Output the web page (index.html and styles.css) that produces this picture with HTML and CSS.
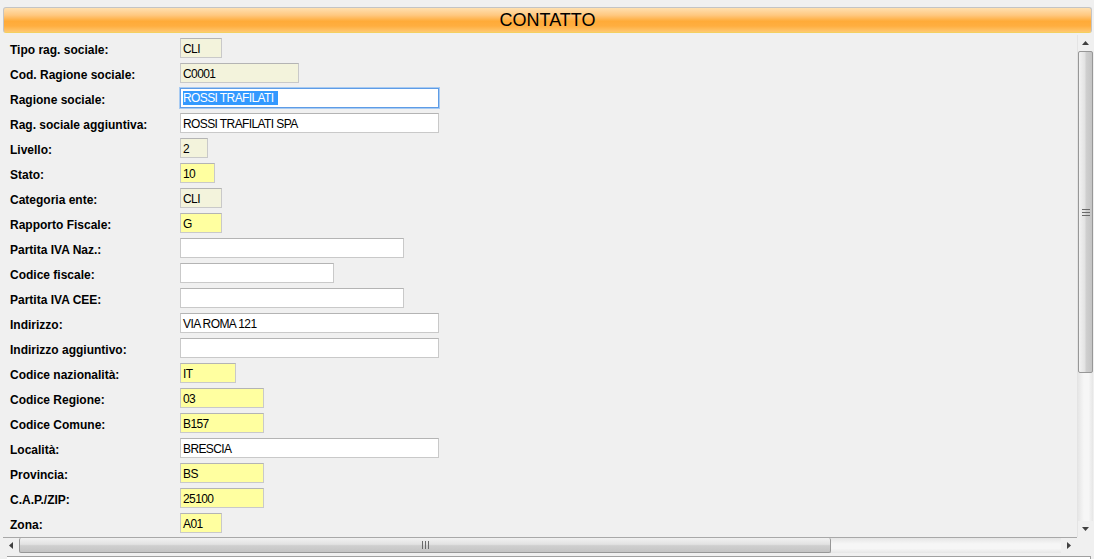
FILE: index.html
```html
<!DOCTYPE html>
<html lang="it">
<head>
<meta charset="utf-8">
<title>Contatto</title>
<link rel="stylesheet" href="styles.css">
</head>
<body>
<div class="page">
  <div class="header">CONTATTO</div>
  <div class="panel">
    <div class="content">
      <div class="row"><span class="label">Tipo rag. sociale:</span><span class="field ro" style="width:42px">CLI</span></div>
      <div class="row"><span class="label">Cod. Ragione sociale:</span><span class="field ro" style="width:119px">C0001</span></div>
      <div class="row"><span class="label">Ragione sociale:</span><span class="field focus" style="width:259px"><span class="sel">ROSSI TRAFILATI</span></span></div>
      <div class="row"><span class="label">Rag. sociale aggiuntiva:</span><span class="field" style="width:259px">ROSSI TRAFILATI SPA</span></div>
      <div class="row"><span class="label">Livello:</span><span class="field ro" style="width:28px">2</span></div>
      <div class="row"><span class="label">Stato:</span><span class="field req" style="width:35px">10</span></div>
      <div class="row"><span class="label">Categoria ente:</span><span class="field ro" style="width:42px">CLI</span></div>
      <div class="row"><span class="label">Rapporto Fiscale:</span><span class="field req" style="width:42px">G</span></div>
      <div class="row"><span class="label">Partita IVA Naz.:</span><span class="field" style="width:224px"></span></div>
      <div class="row"><span class="label">Codice fiscale:</span><span class="field" style="width:154px"></span></div>
      <div class="row"><span class="label">Partita IVA CEE:</span><span class="field" style="width:224px"></span></div>
      <div class="row"><span class="label">Indirizzo:</span><span class="field" style="width:259px">VIA ROMA 121</span></div>
      <div class="row"><span class="label">Indirizzo aggiuntivo:</span><span class="field" style="width:259px"></span></div>
      <div class="row"><span class="label">Codice nazionalità:</span><span class="field req" style="width:56px">IT</span></div>
      <div class="row"><span class="label">Codice Regione:</span><span class="field req" style="width:84px">03</span></div>
      <div class="row"><span class="label">Codice Comune:</span><span class="field req" style="width:84px">B157</span></div>
      <div class="row"><span class="label">Località:</span><span class="field" style="width:259px">BRESCIA</span></div>
      <div class="row"><span class="label">Provincia:</span><span class="field req" style="width:84px">BS</span></div>
      <div class="row"><span class="label">C.A.P./ZIP:</span><span class="field req" style="width:84px">25100</span></div>
      <div class="row"><span class="label">Zona:</span><span class="field req" style="width:42px">A01</span></div>
    </div>
    <div class="vscroll">
      <div class="vbtn"><svg width="7" height="4" viewBox="0 0 7 4"><path d="M3.5 0 L7 4 L0 4 Z" fill="#404040"/></svg></div>
      <div class="vtrack">
        <div class="vthumb"><svg width="8" height="7" viewBox="0 0 8 7"><path d="M0 0.5h8M0 3.5h8M0 6.5h8" stroke="#6a6a6a" stroke-width="1"/></svg></div>
      </div>
      <div class="vbtn"><svg width="7" height="4" viewBox="0 0 7 4"><path d="M0 0 L7 0 L3.5 4 Z" fill="#404040"/></svg></div>
    </div>
    <div class="hscroll">
      <div class="hbtn"><svg width="4" height="7" viewBox="0 0 4 7"><path d="M0 3.5 L4 0 L4 7 Z" fill="#404040"/></svg></div>
      <div class="htrack">
        <div class="hthumb"><svg width="7" height="8" viewBox="0 0 7 8"><path d="M0.5 0v8M3.5 0v8M6.5 0v8" stroke="#6a6a6a" stroke-width="1"/></svg></div>
      </div>
      <div class="hbtn"><svg width="4" height="7" viewBox="0 0 4 7"><path d="M0 0 L4 3.5 L0 7 Z" fill="#404040"/></svg></div>
    </div>
    <div class="corner"></div>
  </div>
  <div class="bottom"></div>
</div>
</body>
</html>
```

FILE: styles.css
```css
html, body {
  margin: 0;
  padding: 0;
  background: #f0f0f0;
  overflow: hidden;
  height: 559px;
}
body {
  font-family: "Liberation Sans", Arial, sans-serif;
  color: #000;
}
.page {
  padding: 7px 1px 0 3px;
}
.header {
  height: 26px;
  box-sizing: border-box;
  margin-right: 1px;
  border: 1px solid #c4c4c4;
  border-bottom-color: #f4d060;
  border-radius: 3px;
  background: linear-gradient(to bottom, #ffe0b0 0%, #ffc880 30%, #ffab38 55%, #ffae40 75%, #ffc870 100%);
  text-align: center;
  font-size: 18px;
  line-height: 25px;
}
.panel {
  margin-top: 2px;
  display: grid;
  grid-template-columns: 1fr 16px;
  grid-template-rows: 502px 16px;
}
.content {
  overflow: hidden;
  padding: 3px 0 0 7px;
  display: flex;
  flex-direction: column;
  gap: 5px;
}
.row {
  display: flex;
  align-items: center;
  height: 20px;
}
.label {
  width: 170px;
  flex: none;
  font-weight: bold;
  font-size: 12px;
  padding-top: 3px;
}
.field {
  box-sizing: border-box;
  height: 20px;
  border: 1px solid #c9c9c9;
  border-top-color: #b4b4b4;
  background: #fff;
  font-size: 12px;
  letter-spacing: -0.6px;
  line-height: 16px;
  padding: 2px 0 0 2px;
  white-space: nowrap;
  overflow: hidden;
}
.field.ro { background: #f3f3dc; }
.field.req { background: #ffffa0; }
.field.focus {
  border-color: #5e9ce6;
  box-shadow: 0 0 0 1px #a8cbf2;
}
.sel {
  display: inline-block;
  background: #3399ff;
  color: #fff;
  line-height: 14px;
  padding-right: 4px;
  vertical-align: top;
}
.vscroll {
  display: flex;
  flex-direction: column;
  background: #f0f0f0;
  border-left: 1px solid #e4e4e4;
}
.vbtn {
  height: 16px;
  display: flex;
  align-items: center;
  justify-content: center;
  flex: none;
}
.vtrack {
  flex: 1;
  background: linear-gradient(to right, #e6e6e6, #f6f6f6 40%, #f6f6f6 70%, #e6e6e6);
}
.vthumb {
  box-sizing: border-box;
  height: 322px;
  border: 1px solid #979797;
  border-radius: 2px;
  background: linear-gradient(to right, #f2f2f2 0%, #e2e2e2 45%, #cfcfcf 55%, #c4c4c4 100%);
  display: flex;
  align-items: center;
  justify-content: center;
}
.hscroll {
  display: flex;
  border-top: 1px solid #a8a8a8;
  background: #f0f0f0;
}
.hbtn {
  width: 16px;
  flex: none;
  display: flex;
  align-items: center;
  justify-content: center;
}
.htrack {
  flex: 1;
  background: linear-gradient(to bottom, #e6e6e6, #f6f6f6 40%, #f6f6f6 70%, #e6e6e6);
}
.hthumb {
  box-sizing: border-box;
  width: 812px;
  height: 100%;
  border: 1px solid #979797;
  border-top: none;
  border-radius: 2px;
  background: linear-gradient(to bottom, #f2f2f2 0%, #e2e2e2 45%, #cfcfcf 55%, #c4c4c4 100%);
  display: flex;
  align-items: center;
  justify-content: center;
}
.corner {
  background: #f0f0f0;
}
.bottom {
  margin: 3px 2px 0 4px;
  height: 10px;
  border-top: 1px solid #a0a0a0;
  border-right: 1px solid #a0a0a0;
  background: #fff;
}
```
